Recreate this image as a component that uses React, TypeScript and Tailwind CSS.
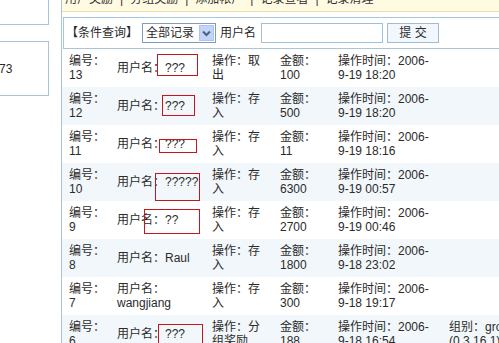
import React from 'react';

type Box = { l: number; t: number; w: number; h: number };

interface Row {
  id: string;
  user: string[];
  op: string[];
  amt: string;
  time: string;
  group?: string[];
  box?: Box;
}

const rows: Row[] = [
  { id: '13', user: ['用户名：???'], op: ['操作：取', '出'], amt: '100', time: '9-19 18:20', box: { l: 95, t: 5, w: 41, h: 22 } },
  { id: '12', user: ['用户名：???'], op: ['操作：存', '入'], amt: '500', time: '9-19 18:20', box: { l: 100, t: 8, w: 33, h: 21 } },
  { id: '11', user: ['用户名：???'], op: ['操作：存', '入'], amt: '11', time: '9-19 18:16', box: { l: 97, t: 14, w: 38, h: 14 } },
  { id: '10', user: ['用户名：?????'], op: ['操作：存', '入'], amt: '6300', time: '9-19 00:57', box: { l: 93, t: 10, w: 45, h: 28 } },
  { id: '9', user: ['用户名：??'], op: ['操作：存', '入'], amt: '2700', time: '9-19 00:46', box: { l: 82, t: 8, w: 56, h: 25 } },
  { id: '8', user: ['用户名：Raul'], op: ['操作：存', '入'], amt: '1800', time: '9-18 23:02' },
  { id: '7', user: ['用户名：', 'wangjiang'], op: ['操作：存', '入'], amt: '300', time: '9-18 19:17' },
  {
    id: '6',
    user: ['用户名：???'],
    op: ['操作：分', '组奖励'],
    amt: '188',
    time: '9-18 16:54',
    group: ['组别：group', '(0,3,16,1)'],
    box: { l: 96, t: 9, w: 45, h: 30 },
  },
];

const navItems = ['用户奖励', '分组奖励', '添加帐户', '记录查看', '记录清理'];

const Lines: React.FC<{ lines: string[]; className: string }> = ({ lines, className }) => (
  <div className={`shrink-0 whitespace-nowrap ${className}`}>
    {lines.map((l, i) => (
      <div key={i}>{l}</div>
    ))}
  </div>
);

const App: React.FC = () => {
  return (
    <div className="w-[499px] h-[343px] overflow-hidden bg-white flex font-['Liberation_Sans','Noto_Sans_CJK_SC',sans-serif] text-[12px] leading-[14px] text-[#2b2b2b]">
      {/* left side boxes */}
      <div className="w-[61px] shrink-0 flex flex-col">
        <div className="w-[49px] h-[25px] border-r border-b border-[#a9c6d9]" />
        <div className="mt-[16px] w-[49px] h-[55px] border-t border-r border-b border-[#a9c6d9] flex items-center">
          <span className="-ml-[1px]">73</span>
        </div>
      </div>

      {/* main frame */}
      <div className="flex-1 min-w-0 border-l border-[#a9c6d9] flex flex-col">
        {/* top nav, scrolled off */}
        <div className="h-[12px] shrink-0 bg-[#fffbe3] border-b border-[#e6dfae] overflow-hidden">
          <div className="flex items-start pl-[3px] -mt-[8px] whitespace-nowrap text-[#333]">
            {navItems.map((n, i) => (
              <React.Fragment key={n}>
                {i > 0 && <span className="mx-[7px]">|</span>}
                <span>{n}</span>
              </React.Fragment>
            ))}
          </div>
        </div>

        {/* query */}
        <div className="mt-[5px] ml-[1px] h-[32px] shrink-0 border border-r-0 border-[#a9c6d9] flex items-center pl-[2px]">
          <span className="whitespace-nowrap">【条件查询】</span>
          <div className="ml-[4px] w-[74px] h-[20px] border border-[#7f9db9] bg-white flex items-center">
            <span className="pl-[3px] flex-1 whitespace-nowrap">全部记录</span>
            <div className="w-[15px] h-[16px] mr-[1px] bg-[#c2d4f7] border border-[#b0c4ee] flex items-center justify-center">
              <svg width="9" height="7" viewBox="0 0 9 7">
                <path d="M1 1.5 L4.5 5 L8 1.5" stroke="#4d6185" strokeWidth="2" fill="none" />
              </svg>
            </div>
          </div>
          <span className="ml-[4px] whitespace-nowrap">用户名</span>
          <div className="ml-[5px] w-[122px] h-[20px] border border-[#9fc0d8] bg-white" />
          <div className="ml-[4px] w-[52px] h-[20px] border border-[#9fbcd4] bg-[#f1f7fc] flex items-center justify-center whitespace-nowrap">
            提 交
          </div>
        </div>

        {/* records */}
        <div className="flex flex-col">
          {rows.map((r, i) => (
            <div
              key={r.id}
              className={`relative h-[38px] shrink-0 flex items-center pl-[7px] ${i % 2 === 1 ? 'bg-[#f2f7fb]' : 'bg-white'}`}
            >
              <Lines lines={['编号：', r.id]} className="w-[48px]" />
              <Lines lines={r.user} className="w-[95px]" />
              <Lines lines={r.op} className="w-[68px]" />
              <Lines lines={['金额：', r.amt]} className="w-[58px]" />
              <Lines lines={['操作时间：2006-', r.time]} className="w-[111px]" />
              {r.group && <Lines lines={r.group} className="w-[80px]" />}
              {r.box && (
                <span
                  className="absolute border border-[#c4161c]"
                  style={{ left: r.box.l, top: r.box.t, width: r.box.w, height: r.box.h }}
                />
              )}
            </div>
          ))}
        </div>
      </div>
    </div>
  );
};

export default App;
